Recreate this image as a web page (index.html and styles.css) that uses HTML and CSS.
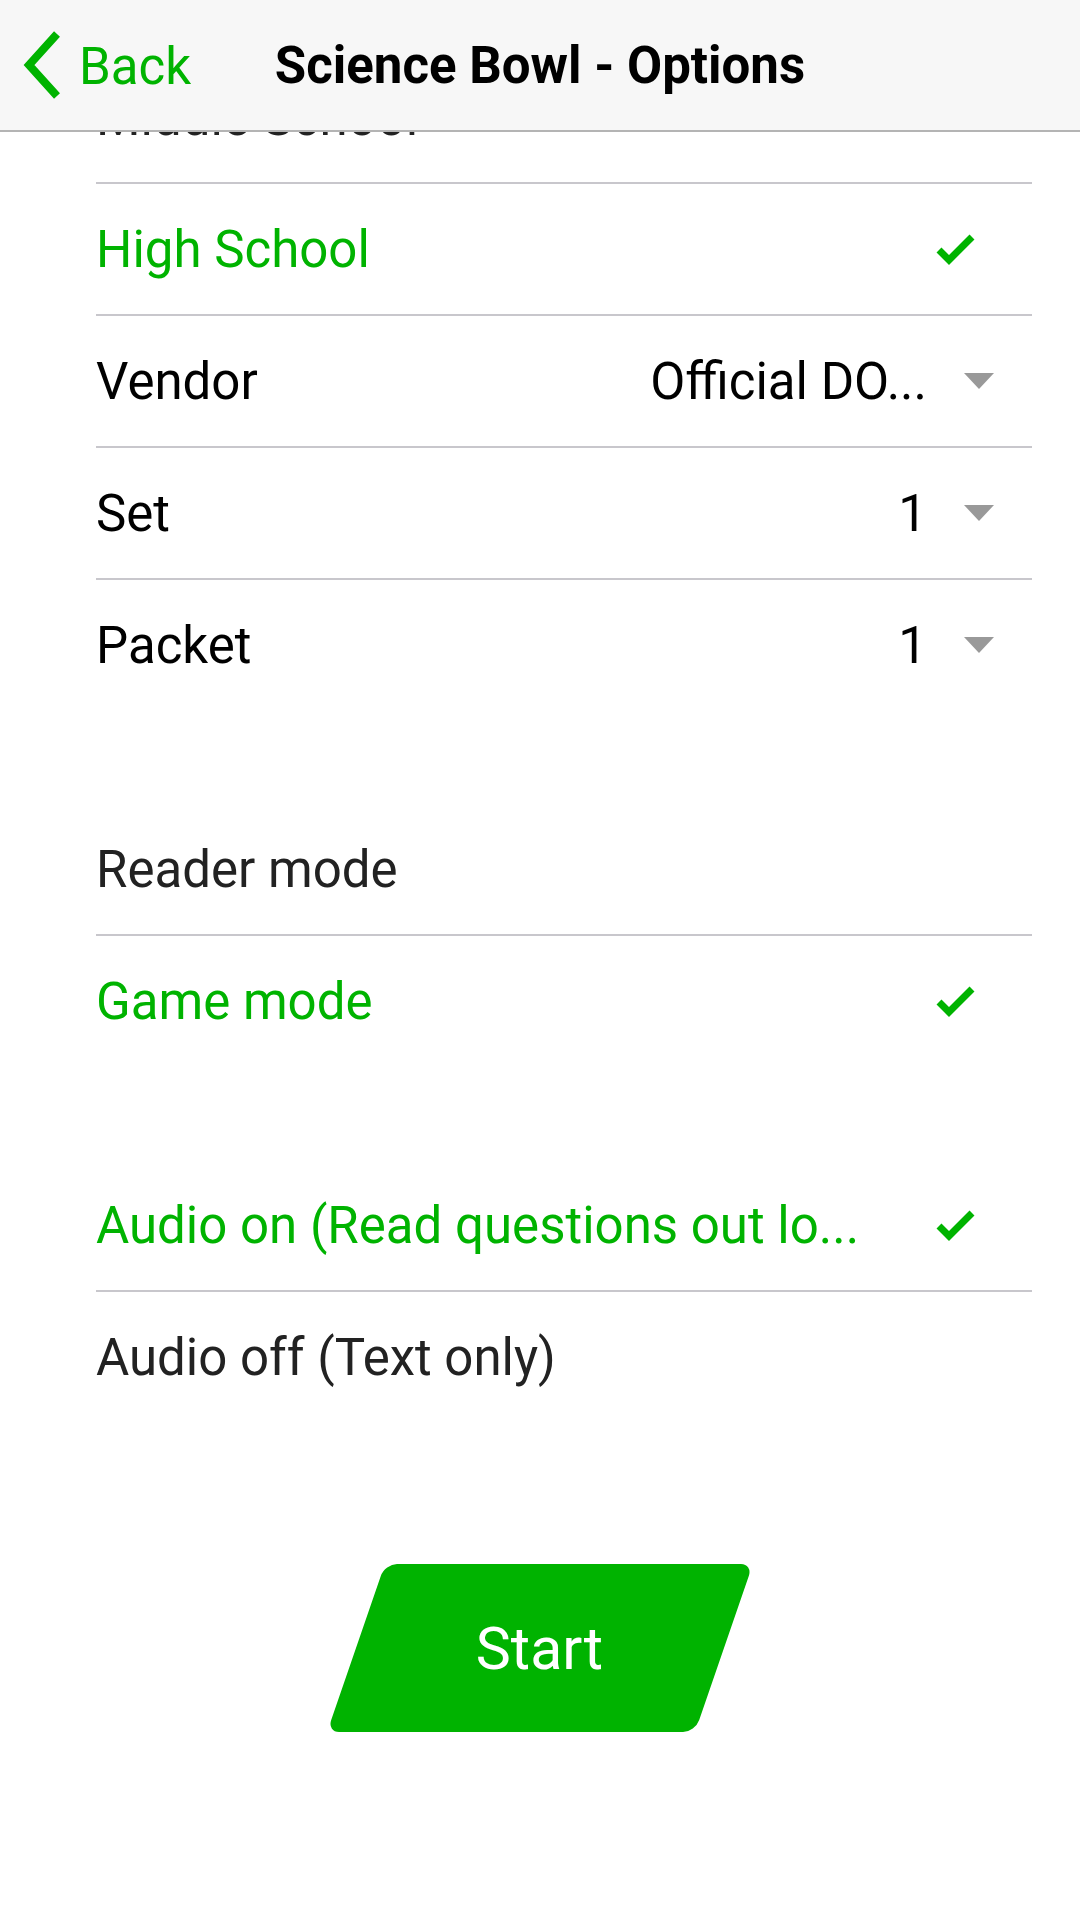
FILE: index.html
```html
<!DOCTYPE html>
<html>
<head>
<meta charset="utf-8">
<link rel="stylesheet" href="styles.css">
</head>
<body>
<div class="screen">
  <header class="header">
    <div class="back">
      <svg class="chevron" width="48" height="70" viewBox="0 0 48 70">
        <polyline points="38,4 10,35 38,66" fill="none" stroke="#00b300" stroke-width="8" stroke-linejoin="miter" stroke-linecap="butt"/>
      </svg>
      <span class="back-label">Back</span>
    </div>
    <div class="title">Science Bowl - Options</div>
    <div class="spacer"></div>
  </header>

  <main class="content">
    <section class="group">
      <div class="row line"><span class="label dim">Middle School</span></div>
      <div class="row line selected"><span class="label">High School</span><span class="check"><svg width="40" height="34" viewBox="0 0 40 34"><polyline points="3,18 13,28 36,5" fill="none" stroke="#00b300" stroke-width="7"/></svg></span></div>
      <div class="row line"><span class="label">Vendor</span><span class="value">Official DO...</span><span class="caret"></span></div>
      <div class="row line"><span class="label">Set</span><span class="value">1</span><span class="caret"></span></div>
      <div class="row"><span class="label">Packet</span><span class="value">1</span><span class="caret"></span></div>
    </section>

    <section class="group">
      <div class="row line"><span class="label dim">Reader mode</span></div>
      <div class="row selected"><span class="label">Game mode</span><span class="check"><svg width="40" height="34" viewBox="0 0 40 34"><polyline points="3,18 13,28 36,5" fill="none" stroke="#00b300" stroke-width="7"/></svg></span></div>
    </section>

    <section class="group">
      <div class="row line selected"><span class="label">Audio on (Read questions out lo...</span><span class="check"><svg width="40" height="34" viewBox="0 0 40 34"><polyline points="3,18 13,28 36,5" fill="none" stroke="#00b300" stroke-width="7"/></svg></span></div>
      <div class="row"><span class="label dim">Audio off (Text only)</span></div>
    </section>

    <div class="start-wrap">
      <div class="start"><span class="start-label">Start</span></div>
    </div>
  </main>
</div>
</body>
</html>
```

FILE: styles.css
```css
* { box-sizing: border-box; }
html, body {
  margin: 0;
  padding: 0;
  background: #ffffff;
  font-family: Roboto, "Liberation Sans", sans-serif;
}
.screen {
  position: relative;
  width: 1080px;
  height: 1920px;
  overflow: hidden;
  background: #ffffff;
}
.header {
  position: absolute;
  top: 0;
  left: 0;
  right: 0;
  height: 132px;
  background: #f7f7f7;
  border-bottom: 2px solid #b4b4b4;
  display: grid;
  grid-template-columns: 1fr auto 1fr;
  align-items: center;
  z-index: 2;
}
.back {
  display: flex;
  align-items: center;
  padding-left: 19px;
}
.chevron { display: block; }
.back-label {
  font-size: 51px;
  color: #00b300;
  margin-left: 12px;
  margin-top: 2px;
}
.title {
  font-size: 51px;
  font-weight: 700;
  color: #000;
}
.content {
  padding-top: 52px;
}
.group + .group {
  margin-top: 94px;
}
.row {
  height: 132px;
  margin-left: 96px;
  margin-right: 48px;
  display: flex;
  align-items: center;
  font-size: 51px;
  color: #000;
}
.row:not(.line) { height: 130px; }
.row.line { border-bottom: 2px solid #c8c7cc; }
.label {
  flex: 1;
  white-space: nowrap;
  overflow: hidden;
}
.label.dim { color: #222222; }
.row.selected .label { color: #00b300; }
.value {
  white-space: nowrap;
  margin-right: 37px;
}
.caret {
  width: 0;
  height: 0;
  border-left: 15px solid transparent;
  border-right: 15px solid transparent;
  border-top: 16px solid #999999;
  margin-right: 38px;
}
.check {
  display: flex;
  margin-right: 56px;
}
.check svg { display: block; }
.start-wrap {
  display: flex;
  justify-content: center;
  margin-top: 142px;
}
.start {
  width: 368px;
  height: 168px;
  background: #00b300;
  border-radius: 12px;
  transform: skewX(-19deg);
  display: flex;
  align-items: center;
  justify-content: center;
}
.start-label {
  transform: skewX(19deg);
  color: #ffffff;
  font-size: 59px;
}
```
